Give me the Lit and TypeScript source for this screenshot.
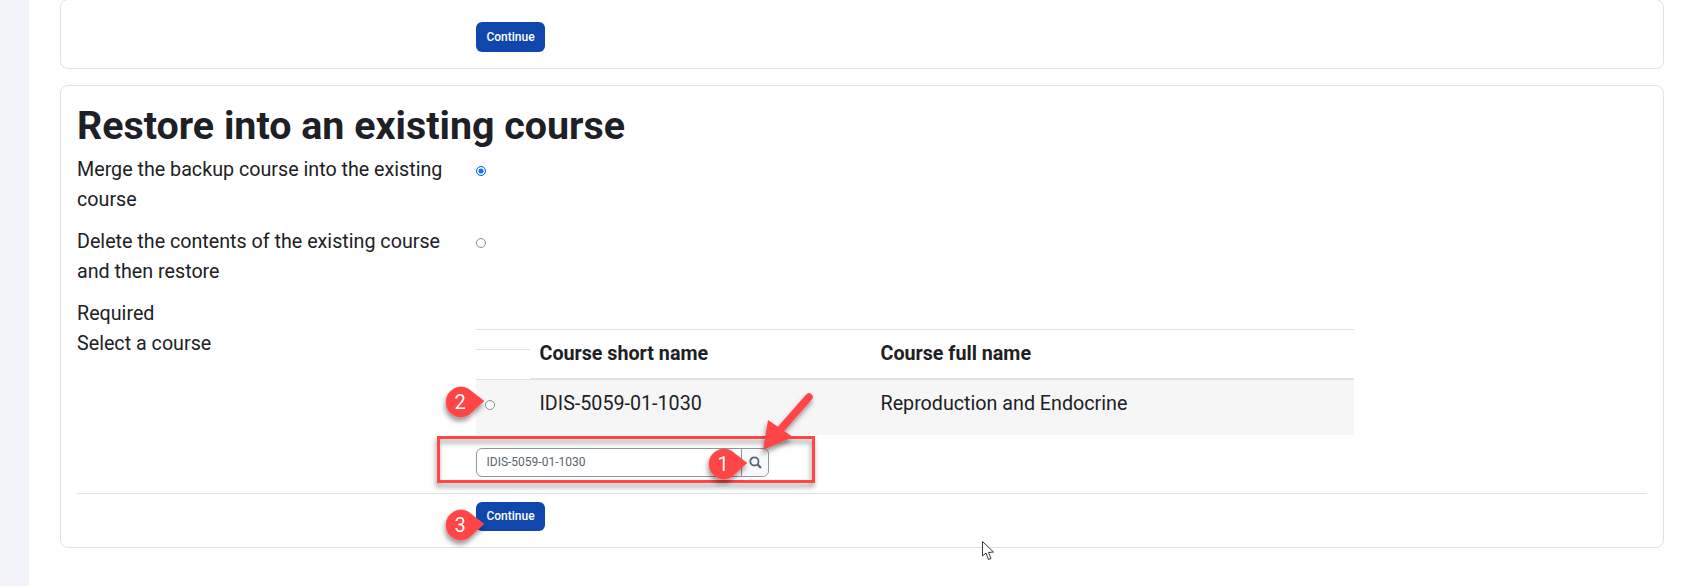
import { LitElement, html, css, svg } from "lit";
import { customElement } from "lit/decorators.js";

const callout = (n: string, x: number, y: number) => svg`
  <g transform="translate(${x} ${y})" filter="url(#sh)">
    <path d="M-15 0 A15 15 0 0 1 7.5 -13 L23 -1 L7.5 13 A15 15 0 0 1 -15 0 Z" fill="#ff4545" stroke="#ff4545" stroke-width="0.5" stroke-linejoin="round"/>
    <text x="-1" y="7" text-anchor="middle" class="num">${n}</text>
  </g>`;

@customElement("app-root")
export class AppRoot extends LitElement {
  static styles = css`
    :host { display: block; position: relative; width: 1688px; height: 586px; overflow: hidden; background: #fff;
      font-family: Roboto, "Liberation Sans", sans-serif; color: #1d2125; font-size: 19.7px; }
    .page { display: flex; height: 586px; }
    .side { width: 29px; background: #f1f3f8; flex: none; }
    .main { flex: 1; padding: 0 24px 0 31px; display: flex; flex-direction: column; gap: 16px; margin-top: -1px; }
    .card { border: 1px solid #dee2e6; border-radius: 8px; background: #fff; box-sizing: border-box; }
    .top { height: 70px; padding: 22px 0 0 415px; }
    .btn { width: 69px; height: 30px; border-radius: 6px; background: #0f47ad; color: #fff; font: 500 12px/30px Roboto, sans-serif; text-align: center; box-sizing: border-box; }
    .foot .btn { height: 29px; line-height: 28px; }
    .restore { height: 463px; padding: 0 16px; }
    h2 { margin: 0; font: 700 39.4px/45px Roboto, sans-serif; padding-top: 17px; height: 52px; box-sizing: content-box; }
    .row { display: grid; grid-template-columns: 399px 1fr; }
    .lbl { line-height: 30px; width: 375px; }
    .opt1 { height: 72px; }
    .opt2 { height: 72px; }
    .radio { width: 10px; height: 10px; border-radius: 50%; border: 1px solid #8a8f94; box-sizing: border-box; background: #fff; display: block; }
    .radio.on { border-color: #0f6cf0; background: #1a6ff0; box-shadow: inset 0 0 0 1.5px #fff; }
    .opt1 .radio, .opt2 .radio { margin-top: 11px; }
    .tbl { width: 878px; margin-top: 30px; display: grid; grid-template-columns: 54px 341px 1fr; border-top: 1px solid #dee2e6; }
    .hc { height: 50px; box-sizing: border-box; border-bottom: 2px solid #dee2e6; font-weight: 700; padding: 9px 0 0 9.5px; line-height: 30px; }
    .h0 { border-bottom: 1px solid #dee2e6; padding: 0; }
    .h0 i { display: block; margin-top: 19px; height: 1px; background: #dee2e6; }
    .c { height: 55px; background: #f6f6f6; padding: 9px 0 0 9.5px; line-height: 30px; box-sizing: border-box; }
    .c0 { padding: 20px 0 0 9px; }
    .search { display: flex; width: 293px; height: 29px; margin-top: 13px; box-sizing: border-box; border: 1px solid #8f959e; border-radius: 6px; font-size: 12px; line-height: 27px; color: #5a6370; }
    .search .v { flex: 1; padding-left: 9.5px; border-right: 1px solid #8f959e; }
    .search .b { width: 26px; display: flex; align-items: center; justify-content: center; background: #f8f9fb; border-radius: 0 6px 6px 0; }
    hr { border: 0; border-top: 1px solid #dee2e6; margin: 16px 0 8px; }
    .foot { padding-left: 399px; }
    .ov { position: absolute; inset: 0; width: 1688px; height: 586px; pointer-events: none; }
    .num { font: 400 20px Roboto, sans-serif; fill: #fff; }
  `;
  render() {
    return html`
      <div class="page">
        <div class="side"></div>
        <div class="main">
          <div class="card top"><div class="btn">Continue</div></div>
          <div class="card restore">
            <h2>Restore into an existing course</h2>
            <div class="row opt1"><div class="lbl">Merge the backup course into the existing course</div><div><span class="radio on"></span></div></div>
            <div class="row opt2"><div class="lbl">Delete the contents of the existing course and then restore</div><div><span class="radio"></span></div></div>
            <div class="row">
              <div class="lbl">Required<br />Select a course</div>
              <div>
                <div class="tbl">
                  <div class="hc h0"><i></i></div>
                  <div class="hc">Course short name</div>
                  <div class="hc">Course full name</div>
                  <div class="c c0"><span class="radio"></span></div>
                  <div class="c">IDIS-5059-01-1030</div>
                  <div class="c">Reproduction and Endocrine</div>
                </div>
                <div class="search">
                  <div class="v">IDIS-5059-01-1030</div>
                  <div class="b"><svg width="13" height="13" viewBox="0 0 13 13" fill="none" stroke="#5a6675" stroke-width="1.8"><circle cx="5.4" cy="5.4" r="4.1"/><path d="M8.4 8.4 L12 12" stroke-width="2.2"/></svg></div>
                </div>
              </div>
            </div>
            <hr />
            <div class="foot"><div class="btn">Continue</div></div>
          </div>
        </div>
      </div>
      <svg class="ov" viewBox="0 0 1688 586">
        <defs>
          <filter id="sh" x="-30%" y="-30%" width="160%" height="170%"><feDropShadow dx="-1" dy="4" stdDeviation="2.5" flood-color="#000" flood-opacity="0.4"/></filter>
        </defs>
        <rect x="438.5" y="437.5" width="375" height="44" fill="none" stroke="#ff4545" stroke-width="3" filter="url(#sh)"/>
        <g filter="url(#sh)">
          <path d="M780 430 L809 397" stroke="#ff4545" stroke-width="7.5" stroke-linecap="round"/>
          <path d="M763 450 L768 420 L793 437 Z" fill="#ff4545"/>
        </g>
        ${callout("1", 724, 464)}
        ${callout("2", 461, 402)}
        ${callout("3", 461, 525)}
        <path d="M982.5 541.5 V556 L986 553 L988.5 559.5 L991 558.5 L988.5 552.5 L993.5 552 Z" fill="#fff" stroke="#222" stroke-width="0.9"/>
      </svg>
    `;
  }
}
